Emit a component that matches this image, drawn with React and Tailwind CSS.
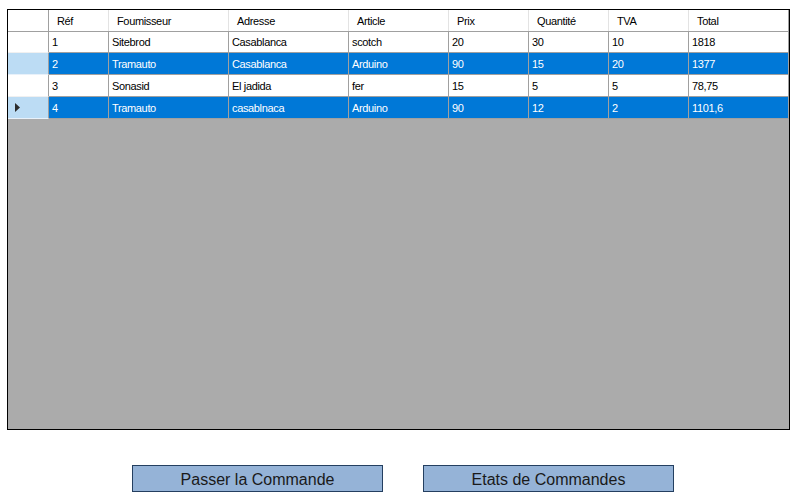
import React from "react";

const columns = [
  { key: "ref", label: "Réf", w: "w-[60px]" },
  { key: "fournisseur", label: "Foumisseur", w: "w-[120px]" },
  { key: "adresse", label: "Adresse", w: "w-[120px]" },
  { key: "article", label: "Article", w: "w-[100px]" },
  { key: "prix", label: "Prix", w: "w-[80px]" },
  { key: "quantite", label: "Quantité", w: "w-[80px]" },
  { key: "tva", label: "TVA", w: "w-[80px]" },
  { key: "total", label: "Total", w: "w-[100px]" },
];

const rows = [
  { ref: "1", fournisseur: "Sitebrod", adresse: "Casablanca", article: "scotch", prix: "20", quantite: "30", tva: "10", total: "1818", selected: false },
  { ref: "2", fournisseur: "Tramauto", adresse: "Casablanca", article: "Arduino", prix: "90", quantite: "15", tva: "20", total: "1377", selected: true },
  { ref: "3", fournisseur: "Sonasid", adresse: "El jadida", article: "fer", prix: "15", quantite: "5", tva: "5", total: "78,75", selected: false },
  { ref: "4", fournisseur: "Tramauto", adresse: "casablnaca", article: "Arduino", prix: "90", quantite: "12", tva: "2", total: "1101,6", selected: true, current: true },
];

export default function App() {
  return (
    <div
      className="w-[802px] h-[504px] bg-white flex flex-col"
      style={{ fontFamily: '"Liberation Sans", Arial, sans-serif' }}
    >
      {/* grid */}
      <div className="ml-[7px] mt-[9px] w-[783px] h-[421px] border border-black bg-[#ababab] flex flex-col">
        {/* header */}
        <div className="flex h-[22px] bg-white border-b border-[#a0a0a0] text-[11px] tracking-[-0.35px] text-black">
          <div className="w-[41px] border-r border-[#a0a0a0]" />
          {columns.map((c) => (
            <div
              key={c.key}
              className={`${c.w} border-r border-[#e3e3e3] last:border-[#a0a0a0] pl-[8px] pt-[1px] flex items-center`}
            >
              {c.label}
            </div>
          ))}
        </div>

        {/* rows */}
        {rows.map((r, i) => (
          <div
            key={r.ref}
            className={`flex ${i === 0 ? "h-[21px]" : "h-[22px]"} text-[11px] tracking-[-0.35px]`}
          >
            <div
              className={`w-[41px] border-r border-b border-r-[#a0a0a0] flex items-center pl-[7px] ${
                r.selected ? "bg-[#bcdcf4] border-b-[#e8f1fa]" : "bg-white border-b-[#f0f0f0]"
              }`}
            >
              {r.current && (
                <svg width="5" height="9" viewBox="0 0 5 9">
                  <path d="M0 0 L5 4.5 L0 9 Z" fill="#2b2b2b" />
                </svg>
              )}
            </div>
            {columns.map((c) => (
              <div
                key={c.key}
                className={`${c.w} border-r border-b border-[#a0a0a0] px-[3px] pt-[1px] flex items-center ${
                  r.selected ? "bg-[#0078d7] text-white" : "bg-white text-black"
                }`}
              >
                {r[c.key]}
              </div>
            ))}
          </div>
        ))}
      </div>

      {/* buttons */}
      <div className="flex mt-[35px] ml-[132px] gap-[40px]">
        <button className="w-[251px] h-[27px] border border-[#243f60] bg-[#95b3d7] text-[16px] text-[#1a1a1a] pt-[2px] flex items-center justify-center">
          Passer la Commande
        </button>
        <button className="w-[251px] h-[27px] border border-[#243f60] bg-[#95b3d7] text-[16px] text-[#1a1a1a] pt-[2px] flex items-center justify-center">
          Etats de Commandes
        </button>
      </div>
    </div>
  );
}
